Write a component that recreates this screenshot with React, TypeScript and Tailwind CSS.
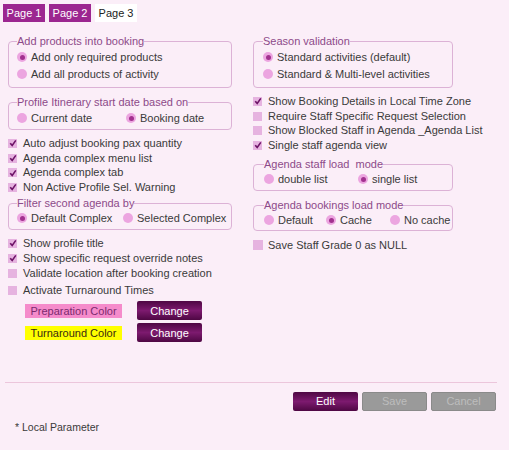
import React from 'react';

type Opt = { label: string; checked?: boolean; w?: string };

function Radio({ checked }: { checked?: boolean }) {
    return (
        <span className="w-[10px] h-[10px] rounded-full bg-[#eca5e0] flex items-center justify-center shrink-0">
            {checked && <span className="w-[5px] h-[5px] rounded-full bg-[#a2318f]" />}
        </span>
    );
}

function Check({ checked }: { checked?: boolean }) {
    return (
        <span className="w-[9px] h-[9px] bg-[#e6b3e0] flex items-center justify-center shrink-0">
            {checked && (
                <svg width="8" height="8" viewBox="0 0 8 8">
                    <path d="M1.2 4.2 L3.2 6.4 L6.8 1.4" fill="none" stroke="#6e1468" strokeWidth="1.6" />
                </svg>
            )}
        </span>
    );
}

function CheckRow({ label, checked }: { label: string; checked?: boolean }) {
    return (
        <div className="h-[14.7px] flex items-center gap-[6px] whitespace-nowrap">
            <Check checked={checked} />
            <span>{label}</span>
        </div>
    );
}

function Group({ title, rows, className, pad }: { title: string; rows: Opt[][]; className: string; pad: string }) {
    return (
        <fieldset className={`border border-[#dcb2d6] rounded-[4px] min-w-0 ${pad} ${className}`}>
            <legend className="leading-[13px] text-[#8d4a89] whitespace-pre">{title}</legend>
            {rows.map((row, i) => (
                <div key={i} className="h-[17px] flex items-center whitespace-nowrap">
                    {row.map(o => (
                        <div key={o.label} className={`flex items-center gap-[4px] shrink-0 ${o.w ?? ''}`}>
                            <Radio checked={o.checked} />
                            <span>{o.label}</span>
                        </div>
                    ))}
                </div>
            ))}
        </fieldset>
    );
}

export default function App() {
    return (
        <div className="w-[509px] h-[450px] bg-[#fbeef8] text-[11px] text-[#3a3a3a] font-['Liberation_Sans',Arial,sans-serif] overflow-hidden">
            <div className="flex gap-[4px] pl-[3px] pt-[4px]">
                <div className="w-[42px] h-[18px] bg-[#9c2690] text-white flex items-center justify-center">Page 1</div>
                <div className="w-[42px] h-[18px] bg-[#9c2690] text-white flex items-center justify-center">Page 2</div>
                <div className="w-[42px] h-[18px] bg-white text-[#222] flex items-center justify-center">Page 3</div>
            </div>

            <div className="flex pl-[8px] gap-[21px] h-[319px]">
                {/* left column */}
                <div className="w-[224px] shrink-0 flex flex-col">
                    <Group
                        title="Add products into booking"
                        pad="px-[8px] pt-[1px] pb-[4px]"
                        className="mt-[12.5px]"
                        rows={[[{ label: 'Add only required products', checked: true }], [{ label: 'Add all products of activity' }]]}
                    />
                    <Group
                        title="Profile Itinerary start date based on"
                        pad="px-[8px] pt-[1px] pb-[2px]"
                        className="mt-[8px]"
                        rows={[[{ label: 'Current date', w: 'w-[109px]' }, { label: 'Booking date', checked: true }]]}
                    />
                    <div className="mt-[6.5px]">
                        <CheckRow label="Auto adjust booking pax quantity" checked />
                        <CheckRow label="Agenda complex menu list" checked />
                        <CheckRow label="Agenda complex tab" checked />
                        <CheckRow label="Non Active Profile Sel. Warning" checked />
                    </div>
                    <Group
                        title="Filter second agenda by"
                        pad="px-[8px] pt-[0px] pb-[2px]"
                        className="mt-[2px]"
                        rows={[[{ label: 'Default Complex', checked: true, w: 'w-[106px]' }, { label: 'Selected Complex' }]]}
                    />
                    <div className="mt-[6px]">
                        <div className="h-[15px] flex items-center gap-[6px] whitespace-nowrap"><Check checked /><span>Show profile title</span></div>
                        <div className="h-[15px] flex items-center gap-[6px] whitespace-nowrap"><Check checked /><span>Show specific request override notes</span></div>
                        <div className="h-[15px] flex items-center gap-[6px] whitespace-nowrap"><Check /><span>Validate location after booking creation</span></div>
                        <div className="h-[15px] mt-[2px] flex items-center gap-[6px] whitespace-nowrap"><Check /><span>Activate Turnaround Times</span></div>
                    </div>
                    <div className="mt-[3.5px] pl-[17px] flex flex-col gap-[3px]">
                        <div className="flex items-center gap-[15px]">
                            <div className="w-[97px] h-[14px] bg-[#f58bcb] text-[#7b2a6e] flex items-center justify-center">Preparation Color</div>
                            <button className="w-[65px] h-[19px] rounded-[2px] bg-[linear-gradient(to_bottom,#4e0743,#7d1a6f_50%,#4e0743)] text-white text-[11px]">Change</button>
                        </div>
                        <div className="flex items-center gap-[15px]">
                            <div className="w-[97px] h-[14px] bg-[#ffff00] text-[#3a2a10] flex items-center justify-center">Turnaround Color</div>
                            <button className="w-[65px] h-[19px] rounded-[2px] bg-[linear-gradient(to_bottom,#4e0743,#7d1a6f_50%,#4e0743)] text-white text-[11px]">Change</button>
                        </div>
                    </div>
                </div>

                {/* right column */}
                <div className="w-[200px] shrink-0 flex flex-col">
                    <Group
                        title="Season validation"
                        pad="px-[9px] pt-[1px] pb-[4px]"
                        className="mt-[12.5px]"
                        rows={[[{ label: 'Standard activities (default)', checked: true }], [{ label: 'Standard & Multi-level activities' }]]}
                    />
                    <div className="mt-[6.5px]">
                        <CheckRow label="Show Booking Details in Local Time Zone" checked />
                        <CheckRow label="Require Staff Specific Request Selection" />
                        <CheckRow label="Show Blocked Staff in Agenda _Agenda List" />
                        <CheckRow label="Single staff agenda view" checked />
                    </div>
                    <Group
                        title="Agenda staff load  mode"
                        pad="px-[10px] pt-[0px] pb-[2px]"
                        className="mt-[5px]"
                        rows={[[{ label: 'double list', w: 'w-[94px]' }, { label: 'single list', checked: true }]]}
                    />
                    <Group
                        title="Agenda bookings load mode"
                        pad="px-[10px] pt-[0px] pb-[1px]"
                        className="mt-[8px]"
                        rows={[[{ label: 'Default', w: 'w-[62px]' }, { label: 'Cache', checked: true, w: 'w-[64px]' }, { label: 'No cache' }]]}
                    />
                    <div className="mt-[7px]">
                        <div className="h-[15px] flex items-center gap-[5px] whitespace-nowrap">
                            <span className="w-[10px] h-[10px] bg-[#e6b3e0]" />
                            <span>Save Staff Grade 0 as NULL</span>
                        </div>
                    </div>
                </div>
            </div>

            <div className="ml-[5px] w-[492px] border-t border-[#ecc6dc] mt-[41px]" />
            <div className="flex justify-end gap-[4px] pr-[13px] mt-[9px]">
                <button className="w-[65px] h-[19px] rounded-[2px] bg-[linear-gradient(to_bottom,#4e0743,#7d1a6f_50%,#4e0743)] text-white text-[11px]">Edit</button>
                <button className="w-[65px] h-[19px] rounded-[2px] bg-[#9a9a9a] border border-[#8a8a8a] text-[#bdbdbd] text-[11px]">Save</button>
                <button className="w-[65px] h-[19px] rounded-[2px] bg-[#9a9a9a] border border-[#8a8a8a] text-[#bdbdbd] text-[11px]">Cancel</button>
            </div>
            <div className="mt-[10px] pl-[15px] leading-[13px] text-[10.5px]">* Local Parameter</div>
        </div>
    );
}
